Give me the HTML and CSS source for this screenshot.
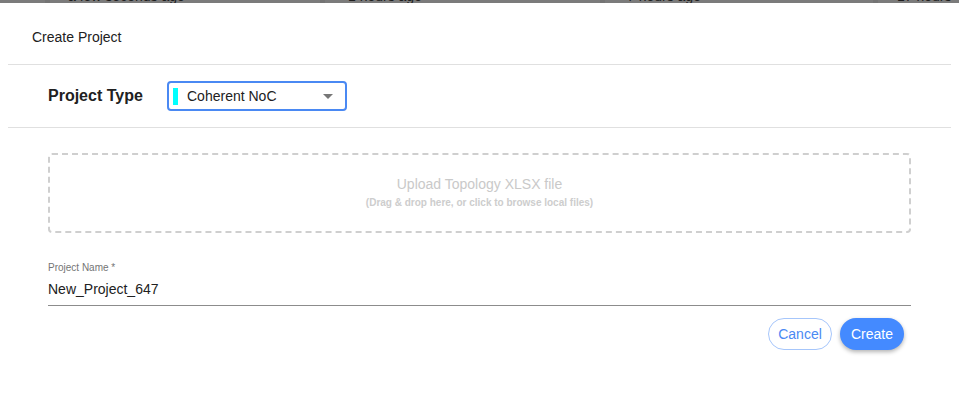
FILE: index.html
```html
<!DOCTYPE html>
<html>
<head>
<meta charset="utf-8">
<link rel="stylesheet" href="styles.css">
</head>
<body>
<div class="backdrop-strip">
  <div class="bg-col c1"><span>a few seconds ago</span></div>
  <div class="bg-col c2"><span>1 hours ago</span></div>
  <div class="bg-col c3"><span>7 hours ago</span></div>
  <div class="bg-col c4"><span>17 hours ago</span></div>
</div>
<div class="dialog">
  <div class="dialog-title">Create Project</div>
  <div class="divider"></div>
  <div class="type-row">
    <div class="type-label">Project Type</div>
    <div class="select">
      <span class="swatch"></span>
      <span class="select-text">Coherent NoC</span>
      <span class="caret"></span>
    </div>
  </div>
  <div class="divider"></div>
  <div class="content">
    <div class="dropzone">
      <div class="dz-main">Upload Topology XLSX file</div>
      <div class="dz-sub">(Drag &amp; drop here, or click to browse local files)</div>
    </div>
    <div class="field">
      <div class="field-label">Project Name *</div>
      <div class="field-input">New_Project_647</div>
    </div>
    <div class="actions">
      <button class="btn btn-outline">Cancel</button>
      <button class="btn btn-primary">Create</button>
    </div>
  </div>
</div>
</body>
</html>
```
FILE: styles.css
```css
* { box-sizing: border-box; }
html, body { margin: 0; padding: 0; background: #fff; }
body {
  font-family: "Liberation Sans", Arial, sans-serif;
  color: #212121;
  width: 959px;
  height: 400px;
  overflow: hidden;
}
.backdrop-strip {
  display: flex;
  height: 3px;
  overflow: hidden;
  background: #7b7b7b;
}
.bg-col {
  font-size: 14px;
  line-height: 16px;
  color: #1e1e1e;
  border-left: 5px solid #747474;
}
.bg-col span { display: block; margin-top: -12px; }
.c1 { margin-left: 45px; width: 275px; padding-left: 18px; }
.c2 { width: 280px; padding-left: 23px; }
.c3 { width: 273px; padding-left: 22px; }
.c4 { flex: 1; padding-left: 19px; }

.dialog {
  background: #fff;
  border-radius: 4px 4px 0 0;
  height: 397px;
}
.dialog-title {
  padding: 24px 32px 17px;
  font-size: 14px;
  line-height: 20px;
  color: #212121;
}
.divider {
  height: 1px;
  margin: 0 8px;
  background: #e0e0e0;
}
.type-row {
  display: flex;
  align-items: center;
  padding: 16px 48px;
  height: 62px;
}
.type-label {
  font-size: 16px;
  font-weight: bold;
  width: 119px;
  color: #212121;
}
.select {
  width: 180px;
  height: 30px;
  border: 2px solid #4a89f3;
  border-radius: 4px;
  display: flex;
  align-items: center;
  padding-left: 4px;
  padding-right: 12px;
}
.swatch {
  width: 5px;
  height: 17px;
  background: #00ffff;
  margin-right: 9px;
}
.select-text {
  flex: 1;
  font-size: 14px;
  color: #212121;
}
.caret {
  width: 0;
  height: 0;
  border-left: 5px solid transparent;
  border-right: 5px solid transparent;
  border-top: 5px solid #777;
  margin-top: 1px;
}
.content {
  padding: 0 48px;
}
.dropzone {
  margin-top: 25px;
  height: 80px;
  border: 2px dashed #cfcfcf;
  border-radius: 4px;
  display: flex;
  flex-direction: column;
  align-items: center;
  padding-top: 20px;
  color: #c9c9c9;
}
.dz-main {
  font-size: 14px;
  line-height: 18px;
}
.dz-sub {
  font-size: 10px;
  font-weight: bold;
  line-height: 14px;
  margin-top: 3px;
  color: #cdcdcd;
}
.field { margin-top: 29px; }
.field-label {
  font-size: 10px;
  line-height: 12px;
  color: #757575;
}
.field-input {
  font-size: 14px;
  line-height: 31px;
  height: 32px;
  border-bottom: 1px solid #8c8c8c;
  color: #212121;
}
.actions {
  display: flex;
  justify-content: flex-end;
  gap: 8px;
  padding-right: 7px;
  margin-top: 12px;
}
.btn {
  width: 64px;
  height: 32px;
  border-radius: 16px;
  font-family: "Liberation Sans", Arial, sans-serif;
  font-size: 14px;
  padding: 0;
  cursor: pointer;
}
.btn-outline {
  background: #fff;
  border: 1px solid #a6c6fb;
  color: #4a89f3;
}
.btn-primary {
  background: #448aff;
  border: none;
  color: #fff;
  box-shadow: 0 2px 4px rgba(0,0,0,0.3);
}
```
